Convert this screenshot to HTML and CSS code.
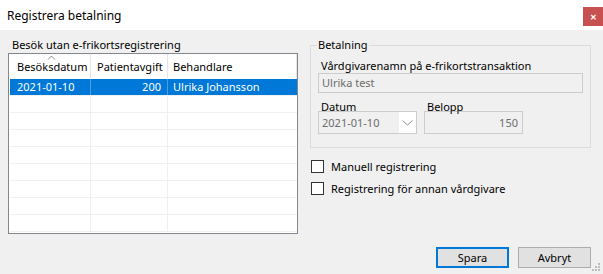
FILE: index.html
```html
<!DOCTYPE html>
<html lang="sv">
<head>
<meta charset="utf-8">
<title>Registrera betalning</title>
<link rel="stylesheet" href="styles.css">
</head>
<body>
<div class="window">
  <div class="titlebar">
    <span class="title">Registrera betalning</span>
    <span class="close">&#x2715;</span>
  </div>
  <div class="main">
    <div class="left">
      <div class="group-label">Besök utan e-frikortsregistrering</div>
      <div class="list">
        <div class="list-head">
          <div class="hcell c1">Besöksdatum
            <svg class="sort" width="9" height="5" viewBox="0 0 9 5"><polyline points="1,4.5 4.5,1 8,4.5" fill="none" stroke="#8a8a8a" stroke-width="1"/></svg>
          </div>
          <div class="hcell c2">Patientavgift</div>
          <div class="hcell c3">Behandlare</div>
        </div>
        <div class="row selected">
          <div class="cell c1">2021-01-10</div>
          <div class="cell c2 num">200</div>
          <div class="cell c3">Ulrika Johansson</div>
        </div>
        <div class="row"><div class="cell c1"></div><div class="cell c2"></div><div class="cell c3"></div></div>
        <div class="row"><div class="cell c1"></div><div class="cell c2"></div><div class="cell c3"></div></div>
        <div class="row"><div class="cell c1"></div><div class="cell c2"></div><div class="cell c3"></div></div>
        <div class="row"><div class="cell c1"></div><div class="cell c2"></div><div class="cell c3"></div></div>
        <div class="row"><div class="cell c1"></div><div class="cell c2"></div><div class="cell c3"></div></div>
        <div class="row"><div class="cell c1"></div><div class="cell c2"></div><div class="cell c3"></div></div>
        <div class="row"><div class="cell c1"></div><div class="cell c2"></div><div class="cell c3"></div></div>
        <div class="row"><div class="cell c1"></div><div class="cell c2"></div><div class="cell c3"></div></div>
      </div>
    </div>
    <div class="right">
      <fieldset class="payment">
        <legend>Betalning</legend>
        <div class="label first">Vårdgivarenamn på e-frikortstransaktion</div>
        <div class="textbox wide">Ulrika test</div>
        <div class="pair">
          <div class="field">
            <div class="label">Datum</div>
            <div class="textbox combo">
              <span class="combo-text">2021-01-10</span>
              <span class="combo-btn"><svg width="11" height="6" viewBox="0 0 11 6"><polyline points="0.5,0.5 5.5,5 10.5,0.5" fill="none" stroke="#8c8c8c" stroke-width="1"/></svg></span>
            </div>
          </div>
          <div class="field">
            <div class="label">Belopp</div>
            <div class="textbox amount">150</div>
          </div>
        </div>
      </fieldset>
      <div class="check"><span class="box"></span><span>Manuell registrering</span></div>
      <div class="check"><span class="box"></span><span>Registrering för annan vårdgivare</span></div>
    </div>
  </div>
  <div class="buttons">
    <div class="btn primary">Spara</div>
    <div class="btn">Avbryt</div>
  </div>
  <div class="grip">
    <span></span><span></span><span></span><span></span><span></span><span></span>
  </div>
</div>
</body>
</html>
```
FILE: styles.css
```css
* { box-sizing: border-box; }
html, body { margin: 0; padding: 0; }
body {
  width: 603px;
  height: 274px;
  overflow: hidden;
  background: #f0f0f0;
  font-family: "Noto Sans", "Open Sans", sans-serif;
  font-size: 11px;
  color: #000;
}
.window { position: relative; width: 603px; height: 274px; }
.titlebar {
  height: 30px;
  background: #fff;
  display: flex;
  align-items: flex-start;
}
.title {
  padding-left: 7px;
  line-height: 16px;
  margin-top: 8px;
  font-size: 12px;
}
.close {
  margin-left: auto;
  margin-top: 7px;
  width: 20px;
  height: 19px;
  background: #c75050;
  color: #fff;
  font-size: 8px;
  font-weight: bold;
  display: flex;
  align-items: center;
  justify-content: center;
}
.main {
  display: flex;
  padding-left: 8px;
}
.left { width: 290px; }
.group-label {
  margin-top: 7px;
  line-height: 16px;
  padding-left: 4px;
}
.list {
  height: 181px;
  border: 1px solid #828790;
  background: #fff;
  overflow: hidden;
}
.list-head {
  display: flex;
  height: 25px;
}
.hcell {
  position: relative;
  line-height: 26px;
  border-right: 1px solid #e5e5e5;
  white-space: nowrap;
}
.list-head .c1 { width: 82px; padding-left: 8px; }
.list-head .c2 { width: 77px; padding-left: 6px; }
.list-head .c3 { width: 129px; padding-left: 5px; }
.sort { position: absolute; left: 38px; top: 1px; }
.row {
  display: flex;
  margin-left: 1px;
  width: 287px;
  height: 17px;
  border-bottom: 1px solid #f0f0f0;
}
.cell {
  line-height: 16px;
  border-right: 1px solid #f0f0f0;
  white-space: nowrap;
}
.row .c1 { width: 81px; padding-left: 7px; }
.row .c2 { width: 77px; padding-right: 6px; }
.row .c3 { width: 129px; padding-left: 5px; border-right: none; }
.num { text-align: right; }
.row.selected { background: #0078d7; color: #fff; }
.row.selected .cell { border-right-color: #4d9be0; }
.row.selected .c3 { border-right: none; }

.right {
  width: 281px;
  margin-left: 12px;
}
.payment {
  margin: 7px 0 0 0;
  padding: 0 7px 13px 7px;
  border: 1px solid #dcdcdc;
  min-width: 0;
}
.payment legend {
  padding: 0 1px;
  margin-left: -1px;
  line-height: 16px;
}
.label {
  line-height: 12px;
  padding-left: 3px;
  white-space: nowrap;
}
.label.first { margin-top: 7px; margin-bottom: 1px; }
.textbox {
  border: 1px solid #cccccc;
  background: #f0f0f0;
  color: #6d6d6d;
  line-height: 18px;
  padding-left: 3px;
}
.wide { height: 20px; }
.pair {
  display: flex;
  gap: 7px;
  margin-top: 8px;
}
.field .label { margin-bottom: -2px; }
.combo {
  width: 99px;
  height: 23px;
  display: flex;
  line-height: 21px;
}
.combo-text { flex: 1; }
.combo-btn {
  width: 17px;
  background: #fff;
  display: flex;
  align-items: center;
  justify-content: center;
  padding-top: 1px;
}
.amount {
  width: 99px;
  height: 23px;
  line-height: 21px;
  text-align: right;
  padding-right: 4px;
}
.check {
  display: flex;
  align-items: center;
  margin-left: 1px;
  height: 13px;
  gap: 7px;
  line-height: 16px;
}
.check:first-of-type { margin-top: 12px; }
.check + .check { margin-top: 9px; }
.box {
  width: 13px;
  height: 13px;
  border: 1px solid #333;
  background: #fff;
  flex: none;
}
.buttons {
  position: absolute;
  left: 0;
  right: 12px;
  top: 247px;
  display: flex;
  justify-content: flex-end;
  gap: 9px;
}
.btn {
  width: 73px;
  height: 21px;
  border: 1px solid #adadad;
  background: #e1e1e1;
  text-align: center;
  line-height: 19px;
}
.btn.primary { border: 2px solid #0078d7; line-height: 17px; }
.grip {
  position: absolute;
  right: 2px;
  bottom: 2px;
  width: 9px;
  height: 9px;
  display: grid;
  grid-template-columns: repeat(3, 3px);
  grid-template-rows: repeat(3, 3px);
}
.grip span { width: 2px; height: 2px; background: #bcbcbc; }
.grip span:nth-child(1) { grid-column: 3; grid-row: 1; }
.grip span:nth-child(2) { grid-column: 2; grid-row: 2; }
.grip span:nth-child(3) { grid-column: 3; grid-row: 2; }
.grip span:nth-child(4) { grid-column: 1; grid-row: 3; }
.grip span:nth-child(5) { grid-column: 2; grid-row: 3; }
.grip span:nth-child(6) { grid-column: 3; grid-row: 3; }
```
